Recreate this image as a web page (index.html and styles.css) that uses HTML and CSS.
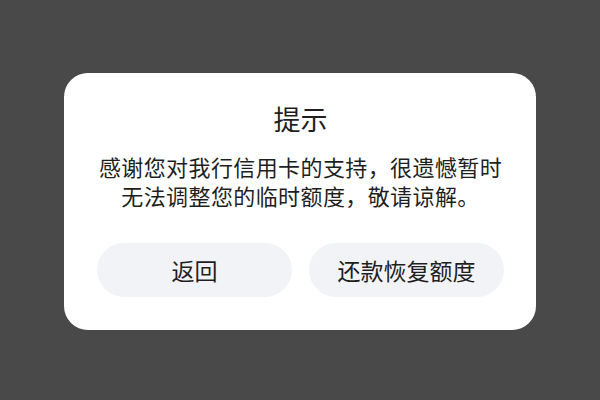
FILE: index.html
```html
<!DOCTYPE html>
<html lang="zh-CN">
<head>
<meta charset="utf-8">
<link rel="stylesheet" href="styles.css">
</head>
<body>
<div class="screen">
  <div class="dialog">
    <div class="title">提示</div>
    <div class="message">感谢您对我行信用卡的支持，很遗憾暂时<br>无法调整您的临时额度，敬请谅解。</div>
    <div class="actions">
      <div class="btn">返回</div>
      <div class="btn">还款恢复额度</div>
    </div>
  </div>
</div>
</body>
</html>
```
FILE: styles.css
```css
html, body {
  margin: 0;
  padding: 0;
}
body {
  width: 600px;
  height: 400px;
  background: #494949;
  font-family: "Noto Sans CJK SC", "Noto Sans", sans-serif;
  color: #1f1f1f;
}
.screen {
  width: 600px;
  height: 400px;
  display: flex;
  justify-content: center;
  padding-top: 73px;
  box-sizing: border-box;
}
.dialog {
  width: 472px;
  height: 257px;
  box-sizing: border-box;
  background: #fff;
  border-radius: 24px;
  padding: 28px 32px 33px 33px;
  display: flex;
  flex-direction: column;
  align-items: center;
}
.title {
  font-size: 27px;
  line-height: 36px;
  text-align: center;
}
.message {
  margin-top: 15px;
  font-size: 22px;
  line-height: 29px;
  letter-spacing: 0.4px;
  text-align: center;
  white-space: nowrap;
}
.actions {
  margin-top: auto;
  width: 100%;
  display: flex;
  gap: 17px;
}
.btn {
  flex: 1;
  height: 54px;
  border-radius: 27px;
  background: #f2f3f7;
  display: flex;
  align-items: center;
  justify-content: center;
  font-size: 23px;
}
```
